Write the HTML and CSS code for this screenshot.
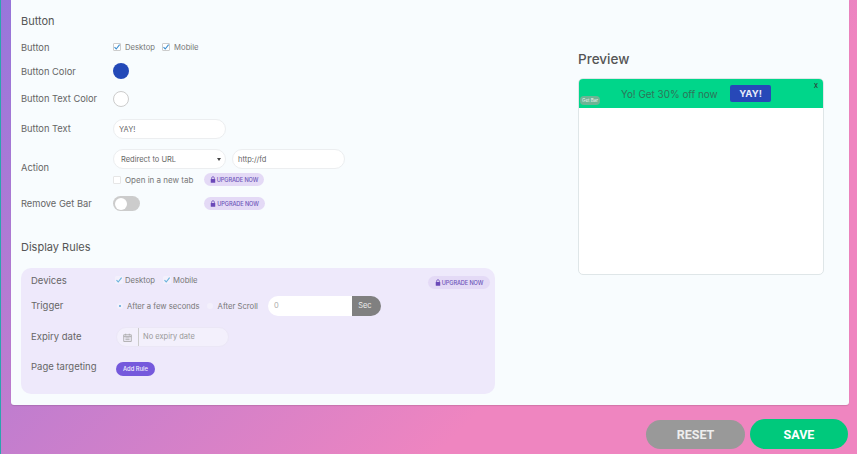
FILE: index.html
```html
<!DOCTYPE html>
<html lang="en">
<head>
    <meta charset="UTF-8">
    <title>Get Bar - Button</title>
    <link rel="stylesheet" href="styles.css">
</head>
<body>
    <div class="page">
        <div class="card">
            <div class="settings">
                <h2 class="section-title">Button</h2>

                <div class="row row-button">
                    <span class="label">Button</span>
                    <span class="check-item"><span class="check-box"><svg viewBox="0 0 8 8"><path d="M1.5 4.2 3.2 6 6.6 1.6"/></svg></span>Desktop</span>
                    <span class="check-item"><span class="check-box"><svg viewBox="0 0 8 8"><path d="M1.5 4.2 3.2 6 6.6 1.6"/></svg></span>Mobile</span>
                </div>
                <div class="row row-color">
                    <span class="label">Button Color</span>
                    <span class="swatch swatch-blue"></span>
                </div>
                <div class="row row-textcolor">
                    <span class="label">Button Text Color</span>
                    <span class="swatch swatch-white"></span>
                </div>
                <div class="row row-text">
                    <span class="label">Button Text</span>
                    <span class="field field-main">YAY!</span>
                </div>
                <div class="row row-action">
                    <span class="label">Action</span>
                    <div class="action-body">
                        <div class="action-fields">
                            <span class="field field-main field-select">Redirect to URL<i class="caret"></i></span>
                            <span class="field field-main">http://fd</span>
                        </div>
                        <div class="action-sub">
                            <span class="check-item check-item-wide"><span class="check-box check-box-empty"></span>Open in a new tab</span>
                            <span class="pill"><svg viewBox="0 0 8 9"><path d="M2.2 4V2.6a1.8 1.8 0 0 1 3.6 0V4" class="lock-arc"/><rect x="1" y="3.8" width="6" height="5" rx=".7"/></svg>UPGRADE NOW</span>
                        </div>
                    </div>
                </div>
                <div class="row row-remove">
                    <span class="label">Remove Get Bar</span>
                    <span class="toggle"><i></i></span>
                    <span class="pill pill-remove"><svg viewBox="0 0 8 9"><path d="M2.2 4V2.6a1.8 1.8 0 0 1 3.6 0V4" class="lock-arc"/><rect x="1" y="3.8" width="6" height="5" rx=".7"/></svg>UPGRADE NOW</span>
                </div>

                <h2 class="section-title title-rules">Display Rules</h2>

                <div class="rules">
                    <span class="pill pill-rules"><svg viewBox="0 0 8 9"><path d="M2.2 4V2.6a1.8 1.8 0 0 1 3.6 0V4" class="lock-arc"/><rect x="1" y="3.8" width="6" height="5" rx=".7"/></svg>UPGRADE NOW</span>
                    <div class="rule rule-devices">
                        <span class="rule-label">Devices</span>
                        <span class="check-item check-item-soft"><span class="check-box check-box-soft"><svg viewBox="0 0 8 8"><path d="M1.5 4.2 3.2 6 6.6 1.6"/></svg></span>Desktop</span>
                        <span class="check-item check-item-soft"><span class="check-box check-box-soft"><svg viewBox="0 0 8 8"><path d="M1.5 4.2 3.2 6 6.6 1.6"/></svg></span>Mobile</span>
                    </div>
                    <div class="rule rule-trigger">
                        <span class="rule-label">Trigger</span>
                        <span class="radio radio-on"></span>
                        <span class="radio-text">After a few seconds</span>
                        <span class="radio"></span>
                        <span class="radio-text">After Scroll</span>
                        <span class="sec-input"><span class="sec-value">0</span><span class="sec-unit">Sec</span></span>
                    </div>
                    <div class="rule rule-expiry">
                        <span class="rule-label">Expiry date</span>
                        <span class="date-field">
                            <span class="date-icon"><svg viewBox="0 0 10 10"><path d="M.8 2h8.4v7.4H.8zM.8 4h8.4M3 .8v2M7 .8v2M2.7 5.5h4.6M2.7 7.4h4.6"/></svg></span>
                            <span class="date-text">No expiry date</span>
                        </span>
                    </div>
                    <div class="rule rule-page">
                        <span class="rule-label">Page targeting</span>
                        <span class="add-rule">Add Rule</span>
                    </div>
                </div>
            </div>

            <div class="preview">
                <h2 class="preview-title">Preview</h2>
                <div class="preview-box">
                    <div class="bar">
                        <span class="bar-text">Yo! Get 30% off now</span>
                        <span class="bar-btn">YAY!</span>
                        <span class="bar-close">x</span>
                        <span class="bar-badge">Get Bar</span>
                    </div>
                </div>
            </div>
        </div>

        <div class="actions">
            <button class="btn btn-reset">RESET</button>
            <button class="btn btn-save">SAVE</button>
        </div>
    </div>
</body>
</html>
```

FILE: styles.css
```css
html, body {
    margin: 0;
    padding: 0;
}
body {
    width: 857px;
    height: 454px;
    overflow: hidden;
    font-family: Inter, "Noto Sans", sans-serif;
    color: #666;
    background: linear-gradient(135deg, #9776dc 0%, #ef85c0 68%);
}
.page {
    height: 454px;
    box-sizing: border-box;
    border-left: 1px solid #2ba4ae;
    padding-left: 10px;
}
.card {
    display: flex;
    width: 838px;
    height: 405px;
    box-sizing: border-box;
    padding: 13px 0 0 10px;
    background: #f8fcfe;
    border-radius: 0 0 3px 3px;
    box-shadow: 0 1px 1px rgba(0, 0, 0, 0.12);
}
.settings {
    width: 474px;
    margin-right: 83px;
}
.section-title {
    margin: 0;
    font-size: 11px;
    line-height: 16px;
    font-weight: 400;
    color: #555;
}
.title-rules {
    margin-top: 28px;
}

/* form rows */
.row {
    display: flex;
    align-items: center;
}
.label {
    width: 92px;
    padding-bottom: 1px;
    font-size: 9.3px;
    color: #666;
}
.row-button { height: 14px; margin-top: 11px; }
.row-color { height: 16px; margin-top: 9px; }
.row-textcolor { height: 16px; margin-top: 12px; }
.row-text { height: 20px; margin-top: 12px; }
.row-action { height: 37px; margin-top: 10px; }
.row-remove { height: 15px; margin-top: 10px; }
.row-button .label,
.row-color .label {
    padding-bottom: 0;
}

.check-item {
    display: flex;
    align-items: center;
    margin-right: 7px;
    font-size: 7.7px;
    color: #777;
}
.check-item-wide {
    width: 91px;
    margin-right: 0;
    font-size: 8px;
}
.check-box {
    display: flex;
    width: 8px;
    height: 8px;
    margin-right: 4px;
    background: #fff;
    border: 1px solid #ccc;
    box-sizing: border-box;
    border-radius: 1px;
}
.check-box svg {
    width: 8px;
    height: 8px;
    margin: -1px;
    flex: none;
}
.check-box path {
    fill: none;
    stroke: #3d8fd0;
    stroke-width: 1.1;
}
.check-box-empty {
    border-color: #e6e6e6;
}
.check-box-soft {
    margin-right: 2px;
    background: #f3f0fc;
    border-color: #f3f0fc;
}
.check-box-soft path {
    stroke: #6ab4dc;
}

.swatch {
    width: 16px;
    height: 16px;
    border-radius: 50%;
    box-sizing: border-box;
}
.swatch-blue {
    background: #2349b8;
}
.swatch-white {
    background: #fff;
    border: 1px solid #ccc;
}

.field {
    display: flex;
    align-items: center;
    height: 20px;
    box-sizing: border-box;
    background: #fff;
    border: 1px solid #eceef0;
    border-radius: 10px;
    padding-left: 5px;
    font-size: 7.5px;
    color: #666;
}
.field-main {
    width: 113px;
}
.field-select {
    position: relative;
    padding-left: 7px;
}
.caret {
    position: absolute;
    right: 4px;
    top: 8px;
    border-top: 3px solid #444;
    border-left: 2px solid transparent;
    border-right: 2px solid transparent;
}
.action-body {
    display: flex;
    flex-direction: column;
}
.action-fields {
    display: flex;
    gap: 6px;
}
.action-sub {
    display: flex;
    align-items: center;
    margin-top: 4px;
}

.pill {
    display: inline-flex;
    align-items: center;
    justify-content: center;
    width: 60px;
    height: 13px;
    background: #e4daf6;
    border-radius: 7px;
    font-size: 5.6px;
    font-weight: 500;
    letter-spacing: -0.1px;
    white-space: nowrap;
    color: #6b55b8;
}
.pill svg {
    width: 6px;
    height: 7px;
    margin-right: 1px;
    flex: none;
}
.pill rect {
    fill: #6a48b8;
}
.pill .lock-arc {
    fill: none;
    stroke: #6a48b8;
}
.pill-remove {
    margin-left: 64px;
    width: 61px;
}
.pill-rules {
    position: absolute;
    top: 8px;
    right: 5px;
    width: 62px;
}

.toggle {
    display: flex;
    align-items: center;
    width: 27px;
    height: 15px;
    background: #ccc;
    border-radius: 8px;
}
.toggle i {
    width: 12px;
    height: 12px;
    margin-left: 2px;
    background: #fff;
    border-radius: 50%;
}

/* display rules */
.rules {
    position: relative;
    height: 126px;
    margin-top: 13px;
    box-sizing: border-box;
    padding: 5px 0 0 10px;
    background: #eee9fb;
    border-radius: 10px;
}
.rule {
    display: flex;
    align-items: center;
    font-size: 7.7px;
}
.rule-label {
    width: 84px;
    padding-bottom: 2px;
    font-size: 9.5px;
    color: #666;
}
.rule-devices { height: 14px; }
.rule-trigger { height: 20px; margin-top: 9px; }
.rule-expiry { height: 20px; margin-top: 11px; }
.rule-page { height: 14px; margin-top: 15px; }
.rule-devices .rule-label { padding-bottom: 0; }
.rule-page .rule-label { padding-bottom: 6px; }
.check-item-soft {
    margin-right: 8px;
}
.radio {
    width: 6px;
    height: 6px;
    margin: 0 5px 0 2px;
    border-radius: 50%;
    background: #f3f0fc;
    flex: none;
    box-sizing: border-box;
}
.radio-on {
    margin-right: 4px;
    border: 2px solid #f3f0fc;
    background: #5aa6d8;
}
.radio-text {
    margin-right: 5px;
    color: #777;
}
.sec-input {
    display: flex;
    width: 113px;
    height: 20px;
    margin-left: 5px;
    border-radius: 10px;
    overflow: hidden;
}
.sec-value {
    flex: 1;
    padding-left: 6px;
    line-height: 20px;
    font-size: 7.5px;
    color: #aaa;
    background: #fff;
}
.sec-unit {
    width: 29px;
    line-height: 20px;
    padding-right: 3px;
    box-sizing: border-box;
    text-align: center;
    font-size: 7.5px;
    color: #eee;
    background: #808080;
}
.date-field {
    display: flex;
    width: 113px;
    height: 20px;
    margin-left: 1px;
    box-sizing: border-box;
    background: #f3f0fc;
    border: 1px solid #ebe7f6;
    border-radius: 10px;
    overflow: hidden;
}
.date-icon {
    display: flex;
    align-items: center;
    justify-content: center;
    width: 22px;
    border-right: 1px solid #ccc;
    box-sizing: border-box;
}
.date-icon svg {
    width: 9px;
    height: 9px;
}
.date-icon path {
    fill: none;
    stroke: #aaa;
    stroke-width: 1;
}
.date-text {
    padding-left: 4px;
    line-height: 18px;
    font-size: 7.5px;
    color: #999;
}
.add-rule {
    width: 39px;
    height: 14px;
    margin-left: 1px;
    line-height: 14px;
    text-align: center;
    font-size: 5.8px;
    font-weight: 500;
    color: #f3f0fc;
    background: #7559dc;
    border-radius: 7px;
}

/* preview */
.preview {
    width: 246px;
    padding-top: 37px;
}
.preview-title {
    margin: 0 0 10px;
    font-size: 13.5px;
    line-height: 18px;
    font-weight: 500;
    color: #555;
}
.preview-box {
    height: 197px;
    box-sizing: border-box;
    background: #fff;
    border: 1px solid #dfe6e8;
    border-radius: 5px;
    overflow: hidden;
}
.bar {
    position: relative;
    display: flex;
    align-items: center;
    height: 29px;
    padding-left: 42px;
    background: #00d68a;
}
.bar-text {
    width: 109px;
    font-size: 9.9px;
    white-space: nowrap;
    color: #2f7359;
}
.bar-btn {
    width: 41px;
    height: 17px;
    line-height: 17px;
    text-align: center;
    font-size: 9.5px;
    font-weight: 700;
    color: #e8ecfa;
    background: #2748b8;
    border-radius: 2px;
}
.bar-close {
    position: absolute;
    top: 1px;
    right: 5px;
    font-size: 8px;
    color: #333;
}
.bar-badge {
    position: absolute;
    left: 1px;
    top: 17px;
    width: 20px;
    height: 9px;
    line-height: 9px;
    text-align: center;
    font-size: 4.5px;
    color: #f4f4f4;
    background: #6cb595;
    border-radius: 4px;
}

/* footer buttons */
.actions {
    display: flex;
    justify-content: flex-end;
    align-items: center;
    gap: 5px;
    width: 837px;
    margin-top: 14px;
}
.btn {
    width: 98px;
    height: 30px;
    border: none;
    border-radius: 15px;
    font-family: Roboto, sans-serif;
    font-size: 12.5px;
    font-weight: 700;
    color: #fff;
}
.btn-reset {
    width: 99px;
    height: 29px;
    margin-top: 1px;
    color: #eee;
    background: #999;
}
.btn-save {
    background: #00c97c;
}
```
